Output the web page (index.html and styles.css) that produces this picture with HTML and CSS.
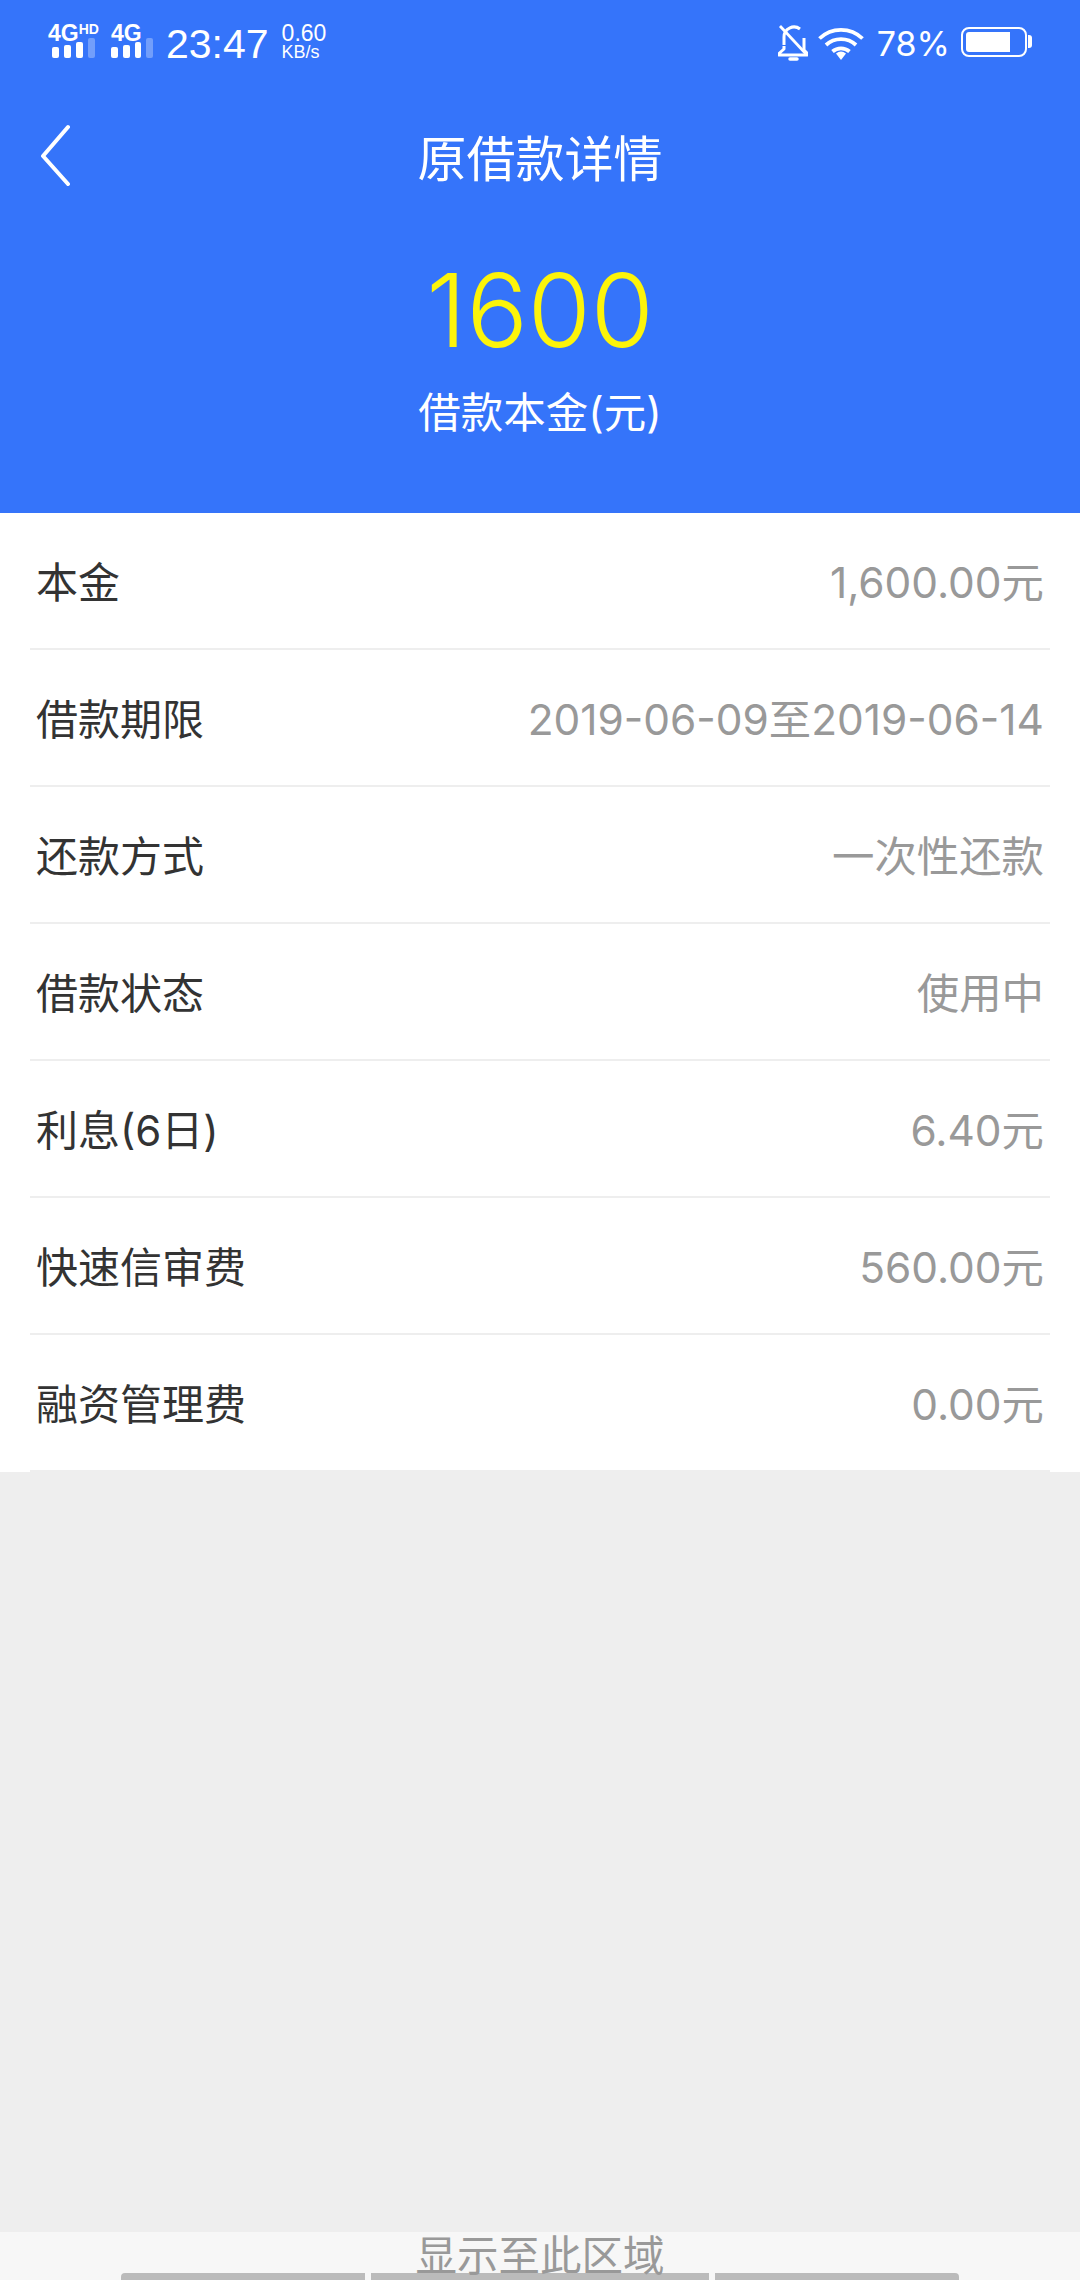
FILE: index.html
```html
<!DOCTYPE html>
<html lang="zh">

<head>
    <meta charset="UTF-8">
    <meta name="viewport" content="width=device-width, initial-scale=1.0">
    <title>原借款详情</title>
    <link rel="stylesheet" href="styles.css">
</head>

<body>
    <div class="screen">
        <header class="hero">
            <div class="status-bar">
                <div class="status-left">
                    <div class="signal">
                        <span class="net">4G<sup>HD</sup></span>
                        <span class="bars bars-inset"><i></i><i></i><i></i><i class="off"></i></span>
                    </div>
                    <div class="signal signal-two">
                        <span class="net">4G</span>
                        <span class="bars"><i></i><i></i><i></i><i class="off"></i></span>
                    </div>
                    <span class="clock">23:47</span>
                    <span class="speed">0.60<small>KB/s</small></span>
                </div>
                <div class="status-right">
                    <svg class="icon-bell" width="30" height="36" viewBox="0 0 30 36" fill="none" stroke="#fff" stroke-width="3">
                        <path d="M6 20V12a10 10 0 0 1 16-8M26 13v12l3 3v2H1v-1.500l5-4.500v-3" stroke-linejoin="round"/>
                        <path d="M12 34h7" stroke-width="3.500" stroke-linecap="round"/>
                        <path d="M2 1l27 29" stroke-width="2.800"/>
                    </svg>
                    <svg class="icon-wifi" width="46" height="33" viewBox="0 0 46 33" fill="none" stroke="#fff" stroke-width="3.800">
                        <path d="M1.500 11.500a31 31 0 0 1 43 0"/>
                        <path d="M8 18a22 22 0 0 1 30 0"/>
                        <path d="M14.500 24.500a13 13 0 0 1 17 0"/>
                        <path d="M18 26.500a8 8 0 0 1 10 0L23 33z" fill="#fff" stroke="none"/>
                    </svg>
                    <span class="battery-pct">78%</span>
                    <div class="battery"><div class="battery-fill"></div></div>
                </div>
            </div>
            <div class="nav">
                <svg class="back" width="32" height="62" viewBox="0 0 32 62" fill="none" stroke="#fff" stroke-width="4" stroke-linecap="round" stroke-linejoin="round">
                    <path d="M28 3L3 32l25 28"/>
                </svg>
                <h1>原借款详情</h1>
            </div>
            <div class="amount">1600</div>
            <div class="amount-label">借款本金(元)</div>
        </header>

        <ul class="details">
            <li><span>本金</span><span class="val">1,600.00元</span></li>
            <li><span>借款期限</span><span class="val">2019-06-09至2019-06-14</span></li>
            <li><span>还款方式</span><span class="val">一次性还款</span></li>
            <li><span>借款状态</span><span class="val">使用中</span></li>
            <li><span>利息(6日)</span><span class="val">6.40元</span></li>
            <li><span>快速信审费</span><span class="val">560.00元</span></li>
            <li><span>融资管理费</span><span class="val">0.00元</span></li>
        </ul>

        <div class="filler"></div>

        <div class="bottom-area">
            <div class="bottom-bars"><i></i><i class="wide"></i><i></i></div>
            <span class="bottom-text">显示至此区域</span>
        </div>
    </div>
</body>

</html>
```

FILE: styles.css
```css
* {
    box-sizing: border-box;
}

body {
    margin: 0;
    padding: 0;
    font-family: "Inter", "Noto Sans CJK SC", sans-serif;
    background-color: #eeeeee;
}

.screen {
    width: 1080px;
    height: 2280px;
    display: flex;
    flex-direction: column;
    overflow: hidden;
}

.hero {
    height: 513px;
    background-color: #3574fa;
    color: #fff;
    display: flex;
    flex-direction: column;
    align-items: center;
}

.status-bar {
    width: 100%;
    height: 80px;
    padding: 23px 48px 0 48px;
    display: flex;
    justify-content: space-between;
    align-items: flex-start;
}

.status-left,
.status-right {
    display: flex;
    align-items: flex-start;
}

.signal {
    width: 51px;
    display: flex;
    flex-direction: column;
}

.signal-two {
    width: 42px;
    margin-left: 12px;
}

.net {
    font-family: "Liberation Sans", sans-serif;
    font-size: 23px;
    font-weight: 700;
    line-height: 18px;
    margin-top: 1px;
    white-space: nowrap;
}

.net sup {
    font-size: 14px;
    line-height: 0;
    vertical-align: 7px;
}

.bars {
    display: flex;
    align-items: flex-end;
    gap: 5px;
    height: 20px;
    margin-top: -4px;
}

.bars-inset {
    margin-left: 4px;
}

.bars i {
    width: 7px;
    height: 11px;
    background-color: #fff;
    border-radius: 2px;
}

.bars i:nth-child(2) {
    height: 13px;
}

.bars i:nth-child(3) {
    height: 16px;
}

.bars i:nth-child(4) {
    height: 20px;
}

.bars .off {
    opacity: 0.3;
}

.clock {
    font-family: "Liberation Sans", sans-serif;
    font-size: 41px;
    line-height: 44px;
    margin-left: 13px;
    margin-top: -1px;
}

.speed {
    font-family: "Liberation Sans", sans-serif;
    font-size: 23px;
    line-height: 19px;
    margin-left: 13px;
    margin-top: 1px;
    display: flex;
    flex-direction: column;
}

.speed small {
    font-size: 18px;
}

.icon-bell {
    margin-top: 2px;
}

.icon-wifi {
    margin-left: 10px;
    margin-top: 4px;
}

.battery-pct {
    font-size: 34px;
    line-height: 44px;
    margin-left: 13px;
    margin-top: -1px;
}

.battery {
    width: 66px;
    height: 30px;
    margin-left: 11px;
    margin-top: 4px;
    margin-right: 5px;
    padding: 3px;
    border: 2px solid #fff;
    border-radius: 8px;
    position: relative;
}

.battery::after {
    content: "";
    position: absolute;
    right: -7px;
    top: 6px;
    width: 4px;
    height: 13px;
    background-color: #fff;
    border-radius: 0 3px 3px 0;
}

.battery-fill {
    width: 78%;
    height: 100%;
    background-color: #fff;
    border-radius: 3px 0 0 3px;
}

.nav {
    width: 100%;
    height: 76px;
    margin-top: 37px;
    position: relative;
    display: flex;
    justify-content: center;
    align-items: center;
}

.back {
    position: absolute;
    left: 40px;
    top: 7px;
}

.nav h1 {
    margin: 0;
    font-size: 49px;
    font-weight: 400;
}

.amount {
    font-size: 102px;
    font-weight: 340;
    line-height: 116px;
    color: #fcf40a;
    margin-top: 59px;
}

.amount-label {
    font-size: 42.500px;
    line-height: 56px;
    margin-top: 17px;
}

.details {
    list-style: none;
    margin: 0;
    padding: 0 30px;
    background-color: #fff;
}

.details li {
    height: 137px;
    border-bottom: 2px solid #eeeeee;
    display: flex;
    justify-content: space-between;
    align-items: center;
    padding: 0 6px 2px 6px;
    font-size: 42px;
    color: #333;
}

.details .val {
    font-size: 42.400px;
    font-weight: 370;
    color: #999;
}

.filler {
    flex: 1;
}

.bottom-area {
    height: 48px;
    background-color: #f7f7f7;
    position: relative;
    display: flex;
    justify-content: center;
}

.bottom-bars {
    position: absolute;
    left: 121px;
    bottom: 0;
    width: 838px;
    height: 7px;
    display: flex;
    gap: 6px;
}

.bottom-bars i {
    background-color: #bbb;
    width: 244px;
}

.bottom-bars .wide {
    width: 338px;
}

.bottom-bars i:first-child {
    border-radius: 4px 0 0 0;
}

.bottom-bars i:last-child {
    border-radius: 0 4px 0 0;
}

.bottom-text {
    position: relative;
    font-size: 41.500px;
    line-height: 48px;
    color: #999;
}
```
